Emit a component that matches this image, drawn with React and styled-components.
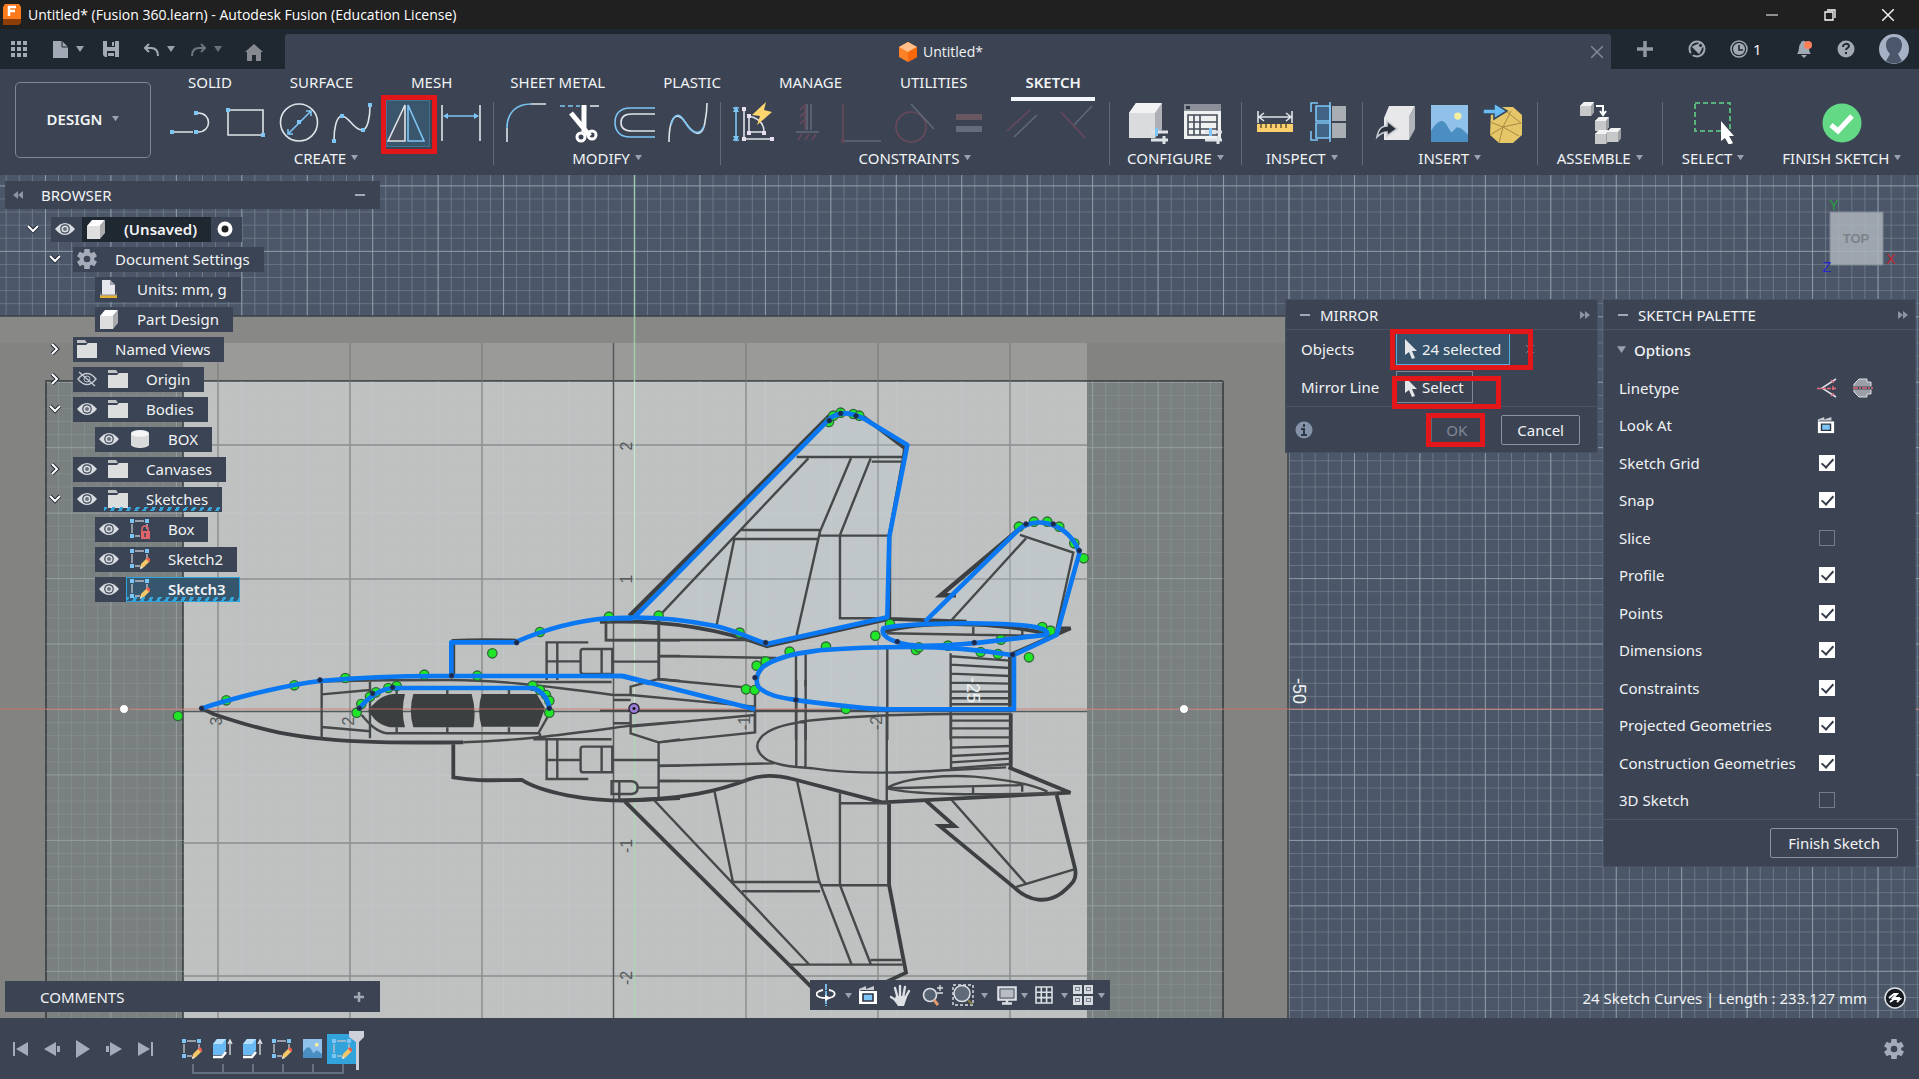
import React from "react";
import styled, { createGlobalStyle, css } from "styled-components";

const c = {
  title: "#1f201f",
  bar: "#1f2731",
  panel: "#3c4454",
  border: "#7d8796",
  text: "#f1f3f5",
  muted: "#a3a9b4",
  blue: "#7cc5f5",
  light: "#dcdfe4",
  red: "#e3161a",
  row: "#3b4454",
};

const Global = createGlobalStyle`
  * { box-sizing: border-box; }
  html, body, #root { height: 100%; }
  body { margin: 0; background: ${c.panel}; color: ${c.text}; font: 15px/20px "Noto Sans", "Open Sans", sans-serif; overflow: hidden; }
  button, input { font: inherit; color: inherit; }
  button { background: none; border: 0; padding: 0; display: inline-flex; align-items: center; justify-content: center; white-space: nowrap; }
  svg { display: block; flex: none; }
  ul { list-style: none; margin: 0; padding: 0; }
`;

/* ---------- shell ---------- */
const Page = styled.div`display: flex; flex-direction: column; height: 100vh;`;
const TitleBar = styled.header`
  display: flex; align-items: center; height: 29px; padding: 0 19px 0 3px; gap: 7px; background: ${c.title};
  font: 14px/20px "Open Sans", "Noto Sans", sans-serif;
`;
const TitleText = styled.span`flex: 1; color: #fff;`;
const WindowButtons = styled.div`display: flex; gap: 34px; button { width: 24px; height: 24px; }`;
const QuickBar = styled.div`display: flex; height: 40px; background: ${c.bar};`;
const QuickTools = styled.nav`display: flex; align-items: center; width: 285px; padding: 0 20px 0 8px; gap: 3px; color: ${c.muted};`;
const QuickButton = styled.button`width: ${(p) => p.$w || 22}px; height: 24px; gap: 8px; margin-left: ${(p) => p.$ml || 0}px; opacity: ${(p) => (p.$dim ? 0.6 : 1)};`;
const DocumentTab = styled.div`
  flex: 1; margin-top: 5px; display: grid; grid-template-columns: 1fr 24px; align-items: center;
  background: ${c.panel}; border-radius: 3px 3px 0 0; padding: 0 2px 0 12px; color: #858c97;
`;
const DocumentName = styled.span`display: flex; justify-content: center; align-items: center; gap: 6px; color: ${c.text}; font: 14px/20px "Open Sans", sans-serif;`;
const AccountTools = styled.nav`display: flex; align-items: center; gap: 24px; width: 308px; padding: 0 14px 0 24px; color: ${c.muted};`;
const AccountButton = styled.button`gap: 5px; margin-left: ${(p) => (p.$apart ? 9 : 0)}px; span { color: ${c.text}; }`;

/* ---------- ribbon ---------- */
const Ribbon = styled.div`display: flex; height: 106px; padding: 0 3px 0 15px; background: ${c.panel};`;
const Workspace = styled.button`
  width: 136px; height: 76px; margin-top: 13px; padding-bottom: 3px; gap: 10px; border: 1px solid ${c.border}; border-radius: 5px; font-weight: 600; flex: none;
`;
const RibbonMain = styled.div`flex: 1; min-width: 0; margin-left: 8px;`;
const Tabs = styled.div`display: flex; gap: 30px; padding-left: 15px; height: 33px;`;
const Tab = styled.button`
  height: 32px; padding: 3px 14px 0; align-items: flex-start;
  border-bottom: 4px solid ${(p) => (p.$active ? "#f3f6fb" : "transparent")};
  font-weight: ${(p) => (p.$active ? 600 : 400)};
`;
const Groups = styled.div`display: flex;`;
const Group = styled.section`
  display: flex; flex-direction: column; align-items: center; justify-content: space-between; height: 63px; padding: 0 ${(p) => (p.$roomy ? 6 : 5)}px;
  border-right: ${(p) => (p.$last ? 0 : 1)}px solid #606a79;
`;
const GroupTools = styled.div`display: flex; height: 42px;`;
const Tool = styled.button`
  position: relative; width: 54px; height: 42px;
  ${(p) => p.$active && css`&::before { content: ""; position: absolute; z-index: 0; inset: -2px 4px -3px 6px; background: #3a566c; border: 1px solid #3f7390; }
    svg { position: relative; }
    &::after { content: ""; position: absolute; inset: -7px -3px -10px 1px; border: 5px solid ${c.red}; }`}
`;
const GroupLabel = styled.button`gap: 5px; height: 15px; padding: 0 ${(p) => (p.$roomy ? 13 : 12)}px;`;

/* ---------- stage and floating panels ---------- */
const Stage = styled.main`position: relative; flex: 1; min-height: 0; overflow: hidden; background: #4b5768;`;
const Drawing = styled.svg`position: absolute; inset: 0; width: 100%; height: 100%;`;
const Overlay = styled.div`position: relative; display: flex; flex-direction: column; justify-content: space-between; height: 100%; padding: 6px 4px 6px 5px;`;
const OverlayTop = styled.div`display: flex; justify-content: space-between;`;
const OverlayBottom = styled.div`display: grid; grid-template-columns: 1fr auto 1fr; align-items: end;`;
const Browser = styled.aside`width: 375px;`;
const BarHeader = styled.div`
  display: flex; align-items: center; height: ${(p) => p.$h || 28}px; padding: 0 15px 0 8px; background: ${c.panel}; width: 375px;
  color: ${c.muted}; span { flex: 1; color: ${c.text}; margin-left: ${(p) => p.$ml || 18}px; }
`;
const Tree = styled.ul`padding-top: 5px;`;
const Node = styled.li`display: flex; align-items: center; height: 30px; padding-left: ${(p) => 18 + p.$level * 22}px;`;
const Toggle = styled.button`width: 20px; height: 20px; margin-right: 8px;`;
const NoToggle = styled.span`width: 28px;`;
const NodeBox = styled.div`display: flex; height: 25px; background: ${c.row};`;
const Cell = styled.span`display: inline-flex; align-items: center; justify-content: center; width: 31px; height: 25px; padding-right: 4px;`;
const hatch = css`&::after { content: ""; position: absolute; left: 0; right: 0; bottom: 1px; height: 4px; background: repeating-linear-gradient(120deg, #35a7dc 0 3px, transparent 3px 7px); }`;
const NodeName = styled.button`
  position: relative; height: 25px; padding-right: 14px; font-weight: ${(p) => (p.$bold ? 600 : 400)};
  ${(p) => p.$root && css`background: ${c.bar};`}
  ${(p) => p.$selected && css`background: #36566e; box-shadow: inset 0 0 0 1px #2ba5dc;`}
  ${(p) => p.$hatch && hatch}
`;
const NodeText = styled.span`padding-left: 11px;`;

const RightSide = styled.div`display: flex; flex-direction: column; align-items: flex-end;`;
const CubeSlot = styled.div`height: 119px; padding: 16px 18px 0 0;`;
const Panels = styled.div`display: flex; align-items: flex-start; gap: 7px;`;
const Panel = styled.section`width: 311px; background: ${c.panel}; box-shadow: 0 0 0 1px #465062;`;
const PanelHeader = styled.div`
  display: flex; align-items: center; height: 30px; padding: 0 7px 0 14px; gap: 10px; color: ${c.muted}; border-bottom: 1px solid #4a5465;
  span { flex: 1; color: ${c.text}; }
`;
const Field = styled.div`display: flex; align-items: center; height: 38px; padding: 0 15px; > label { width: 95px; }`;
const Selector = styled.button`
  position: relative; height: 32px; padding: 0 8px; gap: 5px; border: 1px solid ${(p) => (p.$on ? "#55aede" : c.border)}; background: ${(p) => (p.$on ? "#37536c" : "transparent")};
  &::after { content: ""; position: absolute; inset: ${(p) => (p.$on ? "-5px -24px -6px -7px" : "4px -29px -7px -5px")}; border: 5px solid ${c.red}; }
`;
const Clear = styled.button`margin-left: 16px; color: #858c97;`;
const DialogFooter = styled.div`display: flex; align-items: center; height: 46px; padding: 0 17px 0 9px; border-top: 1px solid #4a5465;`;
const Push = styled.button`
  position: relative; height: 30px; padding: 0 ${(p) => (p.$wide ? 17 : 15)}px; border: 1px solid ${(p) => (p.disabled ? "transparent" : "#8a93a1")}; border-radius: 2px;
  ${(p) => p.disabled && css`margin: 0 21px 0 auto; height: 26px; padding: 0 12px 0 14px; color: #7f8794; border-left-color: #5d6776;
    &::after { content: ""; position: absolute; inset: -5px -6px; border: 5px solid ${c.red}; }`}
`;
const OptionsHeader = styled.button`height: 39px; padding-left: 13px; gap: 8px; font-weight: 500;`;
const OptionRows = styled.div`display: grid; grid-template-rows: repeat(12, 1fr); height: 450px; padding: 0 44px 0 15px;`;
const OptionRow = styled.div`display: flex; align-items: center; justify-content: space-between; padding-right: ${(p) => (p.$wide ? 0 : 36)}px;`;
const IconPair = styled.span`display: flex; gap: 16px; margin-right: -2px;`;
const Check = styled.input`
  appearance: none; width: 16px; height: 16px; margin: 0; display: grid; place-items: center; border: 1px solid #727c8b; background: transparent;
  &:checked { background: #fff; border-color: #fff; }
  &:checked::after { content: ""; width: 5px; height: 10px; margin-bottom: 3px; border: solid #353c4a; border-width: 0 2px 2px 0; transform: rotate(42deg); }
`;
const PaletteFooter = styled.div`display: flex; justify-content: flex-end; align-items: center; height: 47px; padding: 0 17px; border-top: 1px solid #4a5465;`;
const NavBar = styled.nav`display: flex; align-items: center; height: 30px; margin-bottom: 2px; padding: 0 3px 0 2px; background: ${c.panel}; color: ${c.light};`;
const NavTool = styled.button`width: ${(p) => p.$w}px; height: 30px; gap: ${(p) => p.$g || 0}px;`;
const Status = styled.div`display: flex; justify-content: flex-end; align-items: center; gap: 17px; height: 28px; padding-right: 9px;`;

/* ---------- timeline ---------- */
const Timeline = styled.footer`display: flex; align-items: center; height: 61px; padding: 0 15px 0 9px; background: ${c.panel}; color: ${c.muted};`;
const Playback = styled.div`display: flex; gap: 8px; button { width: 23px; height: 26px; }`;
const History = styled.div`position: relative; display: flex; margin: 0 auto 0 21px;`;
const Feature = styled.button`
  position: relative; width: 30px; height: 30px; background: ${(p) => (p.$on ? "#33a3db" : "none")};
  &::after { content: ""; position: absolute; top: 30px; left: ${(p) => (p.$first ? 15 : -15)}px; right: 13px; height: 8px; border: solid #667080; border-width: 0 2px 2px 0; }
`;
const Marker = styled.svg`position: absolute; right: -7px; top: -3px;`;

/* ---------- small icons ---------- */
const Caret = ({ s = 8 }) => <svg width={s} height={s} viewBox="0 0 8 8"><path d="M0 1h8L4 7z" fill="#9aa1ad" /></svg>;
const Svg = ({ w = 20, h = w, children, vb }) => <svg width={w} height={h} viewBox={vb || `0 0 ${w} ${h}`} fill="none">{children}</svg>;
const Minus = () => <Svg w={10}><path d="M0 5h10" stroke={c.muted} strokeWidth="2" /></Svg>;
const Double = ({ flip }) => <Svg w={10}><path d={flip ? "M5 1v8L0 5zM10 1v8L5 5z" : "M0 1v8l5-4zM5 1v8l5-4z"} fill="#8d95a2" /></Svg>;
const Cross = ({ s = 11 }) => <Svg w={s} vb="0 0 11 11"><path d="M0 0 11 11M11 0 0 11" stroke="currentColor" strokeWidth="1.3" /></Svg>;
const Eye = () => <Svg w={20} h={14}><path d="M0 7Q10-5 20 7 10 19 0 7z" fill="#d9dce1" /><circle cx="10" cy="7" r="4.8" fill="#3b4454" /><circle cx="10" cy="7" r="3.6" fill="#d9dce1" /><circle cx="10" cy="7" r="2" fill="#6a717d" /></Svg>;
const EyeOff = () => <Svg w={20} h={16}><path d="M1 8Q10-3 19 8 10 19 1 8zM2 1l16 14" stroke="#c4c8cf" strokeWidth="1.4" /><circle cx="10" cy="8" r="3" stroke="#c4c8cf" /></Svg>;
const Folder = () => <Svg w={20} h={18}><path d="M0 0h8l2 3H0z" fill="#c3c4c6" /><path d="M0 5h9l2-2h9v15H0z" fill="#dcdddd" /></Svg>;
const Cube = () => <Svg w={18} h={19}><path d="M0 6 5 0h13l-5 6z" fill="#fff" /><path d="M0 6h13v13H0z" fill="#dededf" /><path d="m13 6 5-6v13l-5 6z" fill="#a9abad" /></Svg>;
const Cylinder = () => <Svg w={18} h={18}><path d="M0 3v12c2 4 16 4 18 0V3z" fill="#d9dadc" /><ellipse cx="9" cy="3.4" rx="9" ry="3.4" fill="#f6f6f7" /></Svg>;
const GearIcon = ({ s, f = "#a5abb8" }) => (
  <Svg w={s} vb="0 0 24 24">
    {[0, 60, 120].map((a) => <rect key={a} x="8.6" y="0" width="6.8" height="24" rx="1" fill={f} transform={`rotate(${a} 12 12)`} />)}
    <circle cx="12" cy="12" r="6.3" stroke={f} strokeWidth="5" /><circle cx="12" cy="12" r="4" fill={c.panel} />
  </Svg>
);
const UnitsIcon = () => <Svg w={17} h={19}><path d="M2 0h8l5 5v10H2z" fill="#e6e8ee" /><path d="M10 0v5h5z" fill="#9ea4b0" /><path d="M0 15h17v3H0z" fill="#e6b033" /><path d="M0 12v3h17v-3" stroke="#8e95a5" /></Svg>;
const SketchIcon = ({ lock }) => (
  <Svg w={20} h={20}>
    <path d="M5 2h9M2 5v9M17 5v5M5 17h5" stroke="#b9bec7" strokeWidth="1.4" />
    <path d="M0 0h4v4H0zM15 0h4v4h-4zM0 15h4v4H0z" fill={c.blue} />
    {lock ? <g><path d="M12 13v-3a3 3 0 0 1 6 0v3" stroke="#e0646b" strokeWidth="1.6" /><path d="M11 12h9v8h-9z" fill="#e0646b" /><path d="M15 14v4" stroke="#3b4454" strokeWidth="1.5" /></g>
      : <g><path d="m10 20 1-5 6-6 3 3-6 6z" fill="#f6c766" /><path d="m16 10 2-2 3 3-2 2z" fill="#ef5d50" /><path d="m10 20 1-3 2 2z" fill="#eee" /></g>}
  </Svg>
);
const Chevron = ({ open }) => <Svg w={12}><path d={open ? "M1 3l5 5 5-5" : "M3 1l5 5-5 5"} stroke="#232a35" strokeWidth="4" /><path d={open ? "M1 3l5 5 5-5" : "M3 1l5 5-5 5"} stroke="#fff" strokeWidth="2" /></Svg>;
const Pointer = () => <Svg w={12} h={20}><path d="M0 0v16l4-3 3 7 3-1-3-7h5z" fill="#e4e6ea" /></Svg>;
const LookAt = ({ s = 20 }) => <Svg w={s} vb="0 0 20 20"><path d="M1 7V4l7-3v3l8-3v4H3z" fill="#c9ccd1" /><path d="M1 6h18v13H1z" fill="#fff" /><path d="M5 9h10v7H5z" fill={c.blue} stroke="#2e3542" strokeWidth="1.6" /></Svg>;
const Picture = ({ s }) => <Svg w={s} vb="0 0 20 20"><path d="M0 0h20v20H0z" fill="#8fc1ea" /><circle cx="14.5" cy="6" r="2" fill="#f4eea0" /><path d="M0 14C3 9 6 7 8 10l3 5 3-3c2 0 4 2 6 4v4H0z" fill="#4b8ec1" /></Svg>;
const Extrude = () => <Svg w={22} h={22}><path d="m2 6 4-5h9v11l-4 5H2z" fill="#69b9f5" /><path d="m2 6 4-5h9l-4 5z" fill="#b6e0fd" /><path d="M2 19h9l4-5" stroke="#fff" strokeWidth="2.4" /><path d="M19 17V3m-2 3 2-4 2 4" stroke={c.light} strokeWidth="1.3" /></Svg>;

/* ---------- ribbon icons ---------- */
const W = "#dfe3e8";
const offRed = "#67495a";
const offGrey = "#5f6978";
const dot = (x, y) => <rect key={`${x}-${y}`} x={x - 2} y={y - 2} width="4" height="4" fill={c.blue} />;
const T = ({ children }) => <svg width="42" height="42" viewBox="0 0 42 42" fill="none" strokeWidth="1.6" stroke={W}>{children}</svg>;
const NoS = ({ children }) => <g stroke="none">{children}</g>;
const I = {
  line: <T><path d="M2 30h21M28 30c14 0 14-19 0-19" /><NoS>{dot(2, 30)}{dot(26, 30)}{dot(26, 11)}</NoS></T>,
  rect: <T><path d="M4 8h35v25H4z" /><NoS>{dot(4, 8)}{dot(39, 33)}</NoS></T>,
  circle: <T><circle cx="21" cy="20.5" r="18.5" /><path d="m11 31 21-21M10 27v5h5M28 9h5v5" stroke={c.blue} /><NoS>{dot(21, 20)}</NoS></T>,
  spline: <T><path d="M2 38C2 28 4 14 10 14c7 0 11 14 20 14 6 0 8-14 8-24" /><NoS>{dot(2, 39)}{dot(10, 14)}{dot(31, 28)}{dot(38, 3)}</NoS></T>,
  mirror: <T><path d="M2 39 19 3v36z" fill="#48505f" /><path d="m22 3 16 36H22z" stroke={c.blue} /></T>,
  dim: <T><path d="M2 3v36M40 3v36" /><path d="M4 14h34" stroke={c.blue} /><path d="m3 14 5-3v6zM39 14l-5-3v6z" fill={c.blue} stroke="none" /></T>,
  fillet: <T><path d="M2 40V26M26 2h15" /><path d="M2 26C2 10 12 2 26 2" stroke={c.blue} /></T>,
  trim: <T><path d="M1 4h20" stroke={c.blue} strokeDasharray="5 3" /><path d="M31 4h9" /><g stroke="#fff"><path d="M12 11 31 34M25 3v27" strokeWidth="5" /><circle cx="22" cy="35" r="4" strokeWidth="3" /><circle cx="33" cy="33" r="4" strokeWidth="3" /></g></T>,
  offset: <T><path d="M42 6H17C7 6 2 12 2 20.5S7 35 17 35h25" stroke={c.blue} /><path d="M42 12H19c-8 0-11 4-11 8.5S11 29 19 29h23" /></T>,
  curve: <T><path d="M2 40C2 14 10 8 18 20s17 18 20 0c1-5 2-11 2-19" /><path d="M4 23C8 8 14 13 18 20c7 12 15 14 19 4" stroke={c.blue} /></T>,
  auto: <T><path d="M12 7v30h28M17 14v16h15c0-9-6-14-15-16" /><path d="M4 7v30M1 6h6M1 38h6" stroke={c.blue} /><path d="m4 4 3 6H1zM4 40l3-6H1z" fill={c.blue} stroke="none" /><path d="M34 0 20 13l8 1-3 9 15-13-8-2z" fill="#ffd66e" stroke="none" /><g fill="#e7dff0" stroke="none"><path d="M10 5h4v4h-4zM10 35h4v4h-4zM38 35h4v4h-4zM15 12h4v4h-4zM15 29h4v4h-4zM30 29h4v4h-4z" /></g></T>,
  fix: <T><path d="M21 2v26M25 2v26M10 30h23" stroke={offGrey} /><path d="M19 2v26M14 8l5-5M14 15l5-5M14 22l5-5M12 38l4-6M19 38l4-6M26 38l4-6" stroke={offRed} /></T>,
  perp: <T><path d="M3 2v37" stroke={offRed} /><path d="M5 39h36" stroke={offGrey} /><circle cx="3" cy="39" r="2" fill={offRed} stroke="none" /></T>,
  tangent: <T><circle cx="17" cy="25" r="15" stroke={offRed} /><path d="m17 2 23 25" stroke={offGrey} /></T>,
  equal: <T><path d="M8 15h26" stroke="#6a5762" strokeWidth="6" /><path d="M8 27h26" stroke="#646d7b" strokeWidth="6" /></T>,
  parallel: <T><path d="M5 29 28 8" stroke={offRed} /><path d="m12 35 23-22" stroke={offGrey} /></T>,
  mid: <T><path d="M5 10 29 36" stroke={offRed} /><path d="M18 23 36 4" stroke={offGrey} /></T>,
  config: <T><NoS><path d="m2 11 7-10h26v26l-7 9H2z" fill="#dadbdd" /><path d="m2 11 7-10h26l-7 10z" fill="#f2f2f3" /><path d="m28 11 7-10v26l-7 9z" fill="#adb1b5" /></NoS><path d="M24 30h17M24 38h17M37 34v8" strokeWidth="3" /><path d="M28 26h3v8h-3z" fill={c.blue} stroke="none" /></T>,
  table: <T><NoS><path d="M3 2h37v35H3z" fill="#f0f1f1" /><path d="M3 2h37v7H3z" fill="#8b9098" /><path d="M5 4h4v3H5z" fill="#303744" /></NoS><path d="M7 13h29v20H7zM7 20h29M7 27h29M13 13v20M19 13v20" stroke="#444c58" /><path d="M24 30h17M24 38h17M37 34v8" strokeWidth="3" /><path d="M28 26h3v8h-3z" fill={c.blue} stroke="none" /></T>,
  measure: <T><path d="M4 9v12M38 9v12M6 15h30M10 11l-5 4 5 4M32 11l5 4-5 4" /><path d="M3 22h36v8H3z" fill="#fccf6c" stroke="none" /><path d="M7 22v4M12 22v4M17 22v4M22 22v4M27 22v4M32 22v4" stroke="#6d5b37" /></T>,
  section: <T><NoS><path d="M24 4h14v15H24zM24 21h14v15H24z" fill="#a9adb4" /></NoS><path d="M8 4h14v15H8zM8 21h14v15H8z" fill="#426587" stroke={c.blue} /><path d="M10 1H3v9M3 29v9h7M22 0v40" stroke={c.blue} /></T>,
  insert: <T><NoS><path d="m9 16 5-12h26l-6 11v23H9z" fill="#e8e8ea" /><path d="m34 15 6-11v23l-6 11z" fill="#b1b5b9" /><path d="M2 35c2-10 6-11 10-11v-5l10 8-10 7v-4c-4 0-6 1-10 5z" fill="#2b313d" stroke="#c9cdd3" /></NoS></T>,
  picture: <Picture s={37} />,
  mesh: <T><NoS><path d="m8 10 8-5h14l9 8v20l-9 8H16l-9-8z" fill="#e5c769" /><path d="M0 7h11V1l13 8-13 8v-5H0z" fill="#6cbcf4" stroke="#35485c" /></NoS><path d="m7 20 13 5 18-4M7 33l13-8 16 9M20 25l-4 16M24 10l14 11M20 25 28 9" stroke="#a88a42" strokeWidth="1" /></T>,
  assemble: <T><NoS>{[[1, 0], [16, 15], [16, 28], [28, 26]].map(([x, y]) => <g key={`${x}${y}`} transform={`translate(${x} ${y})`}><path d="m0 4 4-4h10v10l-3 4H0z" fill="#c6c8ca" /><path d="m0 4 4-4h10l-3 4z" fill="#f2f2f2" /><path d="m11 4 3-4v10l-3 4z" fill="#9da1a6" /></g>)}</NoS><path d="M17 4h7v8m-3-3 3 4 3-4" stroke="#fff" strokeWidth="2" /></T>,
  select: <T><path d="M3 1h35v28H3z" stroke="#61d386" strokeDasharray="5 3" /><path d="M29 19v20l4-3 4 7 4-2-4-7h5z" fill="#fff" stroke="none" /></T>,
  finish: <T><circle cx="21" cy="21" r="19.5" fill="#64d985" stroke="none" /><path d="m10 23 7 6 14-15" stroke="#fff" strokeWidth="5" /></T>,
};

const groups = [
  ["CREATE", [["Line", "line"], ["Rectangle", "rect"], ["Circle", "circle"], ["Spline", "spline"], ["Mirror", "mirror"], ["Sketch Dimension", "dim"]]],
  ["MODIFY", [["Fillet", "fillet"], ["Trim", "trim"], ["Offset", "offset"], ["Blend Curve", "curve"]]],
  ["CONSTRAINTS", [["Auto Constrain", "auto"], ["Fix", "fix"], ["Perpendicular", "perp"], ["Tangent", "tangent"], ["Equal", "equal"], ["Parallel", "parallel"], ["Midpoint", "mid"]]],
  ["CONFIGURE", [["Configure", "config"], ["Configuration Table", "table"]]],
  ["INSPECT", [["Measure", "measure"], ["Section Analysis", "section"]]],
  ["INSERT", [["Insert Derive", "insert"], ["Canvas", "picture"], ["Insert Mesh", "mesh"]]],
  ["ASSEMBLE", [["Joint", "assemble"]]],
  ["SELECT", [["Select", "select"]]],
  ["FINISH SKETCH", [["Finish", "finish"]]],
];

const nodes = [
  { level: 0, open: true, eye: 1, icon: <Cube />, text: "(Unsaved)", bold: true, root: true, radio: true },
  { level: 1, open: true, icon: <GearIcon s={20} />, text: "Document Settings" },
  { level: 2, icon: <UnitsIcon />, text: "Units: mm, g" },
  { level: 2, icon: <Cube />, text: "Part Design" },
  { level: 1, open: false, icon: <Folder />, text: "Named Views" },
  { level: 1, open: false, eye: 2, icon: <Folder />, text: "Origin" },
  { level: 1, open: true, eye: 1, icon: <Folder />, text: "Bodies" },
  { level: 2, eye: 1, icon: <Cylinder />, text: "BOX" },
  { level: 1, open: false, eye: 1, icon: <Folder />, text: "Canvases" },
  { level: 1, open: true, eye: 1, icon: <Folder />, text: "Sketches", hatch: true },
  { level: 2, eye: 1, icon: <SketchIcon lock />, text: "Box" },
  { level: 2, eye: 1, icon: <SketchIcon />, text: "Sketch2" },
  { level: 2, eye: 1, icon: <SketchIcon />, text: "Sketch3", bold: true, selected: true, hatch: true },
];

const options = [["Sketch Grid", 1], ["Snap", 1], ["Slice", 0], ["Profile", 1], ["Points", 1], ["Dimensions", 1], ["Constraints", 1], ["Projected Geometries", 1], ["Construction Geometries", 1], ["3D Sketch", 0]];

/* ---------- model view ---------- */
const noseDots = [[54, 408], [199, 361], [403, 316], [556, 294], [793, 284], [952, 287], [997, 220], [1140, 156], [1347, 110], [1496, 107], [590, 398], [604, 372], [630, 350], [648, 337], [685, 324], [710, 318], [1118, 317], [1140, 330], [1158, 345], [1168, 362], [1168, 398]];
const wingDots = [[687, 126], [700, 107], [722, 98], [760, 102], [778, 107], [419, 758], [497, 844], [470, 857], [569, 815], [678, 800], [826, 767], [870, 732], [438, 928], [464, 930], [738, 987], [948, 810], [957, 802], [1044, 797], [1142, 816], [1194, 822], [1203, 779], [1287, 832], [1327, 741], [1352, 752], [1257, 440], [1302, 425], [1342, 425], [1378, 440], [1423, 490], [1451, 535]];
const Dots = ({ list }) => list.map(([x, y]) => <circle key={`${x},${y}`} cx={x} cy={y} r="14" fill="#1fe627" stroke="#32683a" strokeWidth="4" />);
const Vertices = ({ list }) => list.map(([x, y]) => <circle key={`${x},${y}`} cx={x} cy={y} r="7" fill="#172750" stroke="#2b3a55" strokeWidth="3" />);

const NOSE = "translate(160 580) scale(.3333)";
const WING = "translate(600 380) scale(.3333)";
const LOWER = "matrix(.4592 0 0 .3333 400 680)";
const thin = { stroke: "#45494a", strokeWidth: 2.4, vectorEffect: "non-scaling-stroke" };
const bold = { stroke: "#3d4042", strokeWidth: 3.8, vectorEffect: "non-scaling-stroke" };
const picked = { stroke: "#0a78f2", strokeWidth: 4.6, vectorEffect: "non-scaling-stroke", strokeLinejoin: "round" };

function ModelView() {
  return (
    <Drawing fill="none" aria-label="Aircraft sketch">
      <defs>
        <pattern id="minor" width="13.09" height="13.09" patternUnits="userSpaceOnUse" patternTransform="translate(634 709)"><path d="M0 0H14M0 0V14" stroke="#b9cbd8" strokeOpacity=".34" strokeWidth="1.6" /></pattern>
        <pattern id="major" width="65.45" height="65.45" patternUnits="userSpaceOnUse" patternTransform="translate(634 709)"><path d="M0 0H66M0 0V66" stroke="#c3d2db" strokeOpacity=".42" strokeWidth="2" /></pattern>
      </defs>
      <g transform="translate(0 -175)">
        <path d="M0 175H5000V2000H0z" fill="url(#minor)" />
        <path d="M0 175H5000V2000H0z" fill="url(#major)" />
        <path d="M-5 316H1288V2000H-5z" fill="#838382" stroke="#3e4244" strokeWidth="1.5" />
        <path d="M0 317H1287V343H0z" fill="#888887" />
        <path d="M183 343H1087V381H183z" fill="#9a9a99" />
        <path d="M46 381H1223V2000H46z" fill="#7a7f7f" />
        <path d="M183 381H1087V2000H183z" fill="#bfc1c1" />
        <path d="M1223 381V2000M46 2000V381H1223M183 381V2000" stroke="#34383a" strokeWidth="1.5" />
        <path d="M46 381H1223V2000H46z" fill="url(#minor)" opacity=".6" />
        <path d="M46 381H1223V2000H46z" fill="url(#major)" opacity=".65" />
        <path d="M218 343V1100M350 343V1100M482 343V1100M746 343V1100M878 343V1100M1010 343V1100M183 445H1087M183 579H1087M183 843H1087M183 976H1087" stroke="#767a7a" strokeOpacity=".7" strokeWidth="1.5" />
        <path d="M613.5 343V1100M183 711.5H1087" stroke="#55595a" strokeWidth="1.5" />
        <path d="M634.5 175V1100" stroke="#a5dcae" strokeOpacity=".75" strokeWidth="1.5" />
        <path d="M634.5 381V709" stroke="#eef5ee" strokeOpacity=".5" />

        <g fill="#c8dbe4" fillOpacity=".22">
          <path transform={WING} d="M105 710 690 115l100-5 132 85-54 275-6 242-362 80C350 730 230 710 105 710z" />
          <path transform={WING} d="M1235 825C1050 795 600 790 490 860c-30 40 0 90 110 102 100 13 200 26 262 26h380z" />
          <path transform={WING} d="m975 725 285-285c100-60 160 20 178 80l-68 245z" />
        </g>

        <g transform={NOSE}>
          <path {...bold} d="M125 385 160 402C300 450 400 475 600 484c100 5 200 4 310 3M880 487V592C960 605 1000 600 1085 600 1150 640 1280 662 1400 662L1560 654M880 290V183C960 178 1000 180 1070 182" />
          <path {...thin} d="M480 305C600 300 720 300 870 300 1000 300 1140 315 1360 345M910 487C1100 480 1200 465 1412 437L1560 425M485 300V475M630 305V475M485 343 630 330M485 441 630 454" />
          <path {...thin} d="M605 405C630 435 650 455 680 460H1135L1172 395M710 442V460M862 442V460M1047 442V460M710 330V345M862 330V345M1047 330V345M1140 460V470" />
          <path {...thin} d="M1160 300V187H1285M1192 187V300M1160 244H1262M1357 207H1270Q1262 207 1262 215V274Q1262 282 1270 282H1357zM1325 207V282M1357 245H1495M1120 306H1355M1120 478H1355M1160 480V597H1285M1192 480V597M1160 540H1262M1357 500H1270Q1262 500 1262 508V569Q1262 577 1270 577H1357zM1325 500V577M1357 540H1495" />
          <path {...thin} d="M1355 604H1415Q1433 606 1433 623T1415 642H1355zM1378 604V660M1433 623H1495M1338 130V181H1560M1496 120V297L1412 320V345H1360M1412 360H1360M1496 228H1560M1496 297 1560 303M1360 430H1412V460L1496 487V660M1412 400V430M1496 487 1560 478M1496 557H1560M1496 603H1560" />
          <path d="M625 390C650 360 670 345 700 342H735Q722 392 735 442H690C660 435 640 420 625 390zM760 342H935Q950 392 940 442H760Q745 392 760 342zM965 342H1130L1155 385 1135 440H965Q950 392 965 342z" fill="#3c3f40" />
        </g>
        <g transform={WING}>
          <path {...bold} strokeWidth="4.4" d="M88 708 690 106M1255 450 1022 646H1068" />
          <path {...bold} d="M790 110 915 205 910 240 868 470V715M0 726C180 719 340 739 500 799L720 750 868 717 1100 725M1370 745H1412L1230 825M1230 830V980M850 755C1000 715 1250 735 1350 765" />
          <path {...thin} d="M185 700 625 235M590 231H908M815 245H905M753 235 660 455 590 765M812 235 720 465V715H862M420 450H660M400 477H655M660 467H868M403 477 350 735M1260 465 1420 518 1370 745M1278 475 1055 720" />
          <path {...thin} d="M18 730V780H450M177 730V898L465 925V1058M177 828 530 834M92 945 465 980M92 1040 465 1005M588 820V1080M617 820V1080M862 800V1080M860 760 1350 768M1120 740V765M1267 750V770" />
          <path {...thin} d="M1052 820V1080M1052 829 1230 842M1052 854 1230 864M1052 881 1230 888M1052 908 1230 911M1052 935H1230M1052 955H1230M1052 973H1230M0 992H1235" />
        </g>
        <g transform={LOWER}>
          <path {...bold} d="M490 365 895 920M480 361C620 360 700 330 760 298Q800 278 855 297L1050 367 1460 338 1325 262M1065 370V615L1102 878 1060 905M1330 100V262" />
          <path {...bold} d="M1145 362 1208 438H1175L1340 625C1370 665 1410 670 1440 640 1465 610 1475 600 1470 565L1430 345" />
          <path {...thin} d="M553 360 890 852M845 854H1095M1025 840H1092M865 305 912 600 983 852M958 340V615L1025 852M958 370H1065M725 606H912M745 634H915M915 616H1065M685 335 725 606M563 258 815 250M563 303H755M563 187 773 157V90" />
          <path {...thin} d="M860 127H885M870 127C780 145 755 200 800 240 830 260 870 262 900 265 1000 285 1100 278 1200 270L1320 262M870 125C950 112 1050 103 1200 102H1330M863 0V262M883 0V20M883 127V262M1060 90V370" />
          <path {...thin} d="M1200 100V268M1200 122H1330M1200 145H1330M1200 172H1330M1200 203 1330 198M1200 228 1330 219M1200 247 1330 236M1200 265 1330 252M1060 325C1100 290 1200 285 1250 290 1330 300 1380 315 1410 335M1060 325C1120 345 1250 345 1430 340M1065 325 1355 315M1248 318V342M1355 315V335M1200 358 1362 610M1340 622 1468 568" />
        </g>

        <path d="M0 709H5000" stroke="#d5705f" strokeOpacity=".8" />
        <g transform={NOSE}>
          <Dots list={noseDots} />
          <path {...picked} d="M125 385C250 345 400 312 480 303 600 292 750 287 874 288H1385L1470 310M874 288V187H1065C1150 150 1250 122 1345 115H1420M598 385C630 345 670 325 700 324H1120C1150 335 1165 360 1168 385" />
          <Vertices list={[[125, 385], [480, 300], [1070, 188], [875, 287], [598, 385], [1168, 385], [638, 340], [698, 322]]} />
        </g>
        <g transform={WING}>
          <Dots list={wingDots} />
          <path {...picked} d="M-5 718C120 705 230 715 347 738 400 750 440 770 500 792L862 712 868 470 922 195 790 115Q730 85 690 115L105 710M0 888H70L465 988" />
          <path {...picked} d="M1235 825Q1050 795 862 802C700 805 560 810 490 860Q460 890 475 920C500 950 560 955 600 962 700 975 800 988 862 988H1242V825L1370 765 1438 520C1420 450 1330 400 1260 445L975 725" />
          <path {...picked} d="M850 745C900 730 1200 722 1310 742Q1350 752 1340 764C1200 780 1080 800 950 797 880 790 840 770 850 745z" />
          <Vertices list={[[497, 788], [722, 100], [768, 108], [688, 122], [588, 960], [465, 893], [1123, 788], [892, 785], [1238, 824], [1278, 432], [1360, 432], [1438, 512]]} />
        </g>
        <circle cx="634" cy="708.5" r="5" fill="#9b7fd6" stroke="#32263f" strokeWidth="1.5" /><circle cx="634" cy="708.5" r="1.5" fill="#111" />
        <circle cx="124" cy="709" r="4.5" fill="#fff" stroke="#777" /><circle cx="1184" cy="709" r="4.5" fill="#fff" stroke="#777" />
        <g fontFamily="Liberation Sans, sans-serif" fontSize="16" textAnchor="middle" fill="#55595b">
          {[["2", 632, 446], ["1", 632, 579], ["-1", 632, 846], ["-2", 632, 978], ["3", 222, 721], ["2", 354, 721], ["-1", 750, 723], ["-2", 882, 723]].map(([t, x, y]) => <text key={`${x}${y}`} transform={`translate(${x} ${y}) rotate(-90)`}>{t}</text>)}
          <text transform="translate(967 690) rotate(90)" fontSize="18" fill="#eef2f3">-25</text>
          <text transform="translate(1293 691) rotate(90)" fontSize="18" fill="#eef2f3">-50</text>
        </g>
      </g>
    </Drawing>
  );
}

const ViewCube = () => (
  <svg width="80" height="80" viewBox="0 0 80 80" role="img" aria-label="View cube">
    <path d="M13 15H66V68H13z" fill="#aab0b8" fillOpacity=".88" stroke="#7e8793" />
    <g fontFamily="Liberation Sans, sans-serif" textAnchor="middle">
      <text x="39" y="46" fontSize="13" fontWeight="700" fill="#7c828a">TOP</text>
      <text x="17" y="13" fontSize="14" fill="#23a03c">Y</text>
      <text x="10" y="75" fontSize="14" fill="#2524c8">Z</text>
      <text x="74" y="67" fontSize="14" fill="#c8242f">X</text>
    </g>
  </svg>
);

function Header() {
  return (
    <>
      <TitleBar>
        <Svg w={18} h={21}><path d="M2 0h14l2 3v14H0V3z" fill="#fb7a1c" /><path d="M0 15h18v4l-2 2H0z" fill="#8d3e07" /><path d="M6 12V3h7M6 7h6" stroke="#fff" strokeWidth="2.5" /></Svg>
        <TitleText>Untitled* (Fusion 360.learn) - Autodesk Fusion (Education License)</TitleText>
        <WindowButtons>
          <button aria-label="Minimize"><Svg w={12}><path d="M0 6h12" stroke="#fff" /></Svg></button>
          <button aria-label="Restore"><Svg w={12}><path d="M1 3h8v8H1zM3 1h8v8" stroke="#fff" strokeWidth="1.3" /></Svg></button>
          <button aria-label="Close"><Cross s={12} /></button>
        </WindowButtons>
      </TitleBar>
      <QuickBar>
        <QuickTools>
          <QuickButton aria-label="Data panel"><Svg w={16}>{[0, 6, 12].map((x) => [0, 6, 12].map((y) => <rect key={x + "" + y} x={x} y={y} width="4" height="4" fill="#a3a9b4" />))}</Svg></QuickButton>
          <QuickButton $ml={15} $w={40} aria-label="File"><Svg w={15} h={17}><path d="M0 0h9l6 6v11H0z" fill="#a3a9b4" /><path d="M9 0v6h6" stroke="#1f2731" /></Svg><Caret /></QuickButton>
          <QuickButton $ml={9} aria-label="Save"><Svg w={16}><path d="M0 0h16v16H2l-2-2z" fill="#a3a9b4" /><path d="M4 0h8v6H4zM4 10h8v6H4z" fill="#1f2731" /><path d="M9 1h2v4H9zM5 12h6v3H5z" fill="#a3a9b4" /></Svg></QuickButton>
          <QuickButton $ml={14} $w={40} aria-label="Undo"><Svg w={15} h={13}><path d="M5 1 1 5l4 4M1 5h6c4 0 7 2 7 8" stroke="#a3a9b4" strokeWidth="2" /></Svg><Caret /></QuickButton>
          <QuickButton $ml={4} $w={40} $dim aria-label="Redo"><Svg w={15} h={13}><path d="m10 1 4 4-4 4M14 5H8C4 5 1 7 1 13" stroke="#a3a9b4" strokeWidth="2" /></Svg><Caret /></QuickButton>
          <QuickButton $ml={14} aria-label="Home"><Svg w={18} h={24}><path d="m0 15 9-8 9 8h-2v9h-5v-6H7v6H2v-9z" fill="#868a90" /></Svg></QuickButton>
        </QuickTools>
        <DocumentTab>
          <DocumentName><Svg w={18} h={20}><path d="m9 0 9 5v10l-9 5-9-5V5z" fill="#fd8126" /><path d="m9 0 9 5-9 5-9-5z" fill="#ffc08b" /><path d="m9 10 9-5v10l-9 5z" fill="#f9690c" /></Svg>Untitled*</DocumentName>
          <button aria-label="Close document"><Cross s={12} /></button>
        </DocumentTab>
        <AccountTools>
          <AccountButton aria-label="New document"><Svg w={20}><path d="M10 2v16M2 10h16" stroke="#9298a2" strokeWidth="3.5" /></Svg></AccountButton>
          <AccountButton $apart aria-label="Extensions"><Svg w={18}><circle cx="9" cy="9" r="7.5" stroke="#a3a9b4" strokeWidth="2" /><path d="m3 15 4-4" stroke="#1f2731" strokeWidth="3" /><path d="m5 7 6 6 2-4-4-4zM9 6l3-3M12 9l3-3" fill="#a3a9b4" stroke="#a3a9b4" strokeWidth="1.6" /></Svg></AccountButton>
          <AccountButton aria-label="Job status 1"><Svg w={18}><circle cx="9" cy="9" r="8" stroke="#a3a9b4" strokeWidth="1.5" /><circle cx="9" cy="9" r="6" fill="#a3a9b4" /><path d="M9 5v5h4" stroke="#1f2731" strokeWidth="1.6" /></Svg><span>1</span></AccountButton>
          <AccountButton $apart aria-label="Notifications"><Svg w={18} h={20}><path d="M2 15c3-3 1-9 4-11 0-3 5-3 5 0 4 2 2 8 5 11zM6 16h6l-3 3z" fill="#a3a9b4" /><circle cx="13" cy="6" r="4" fill="#fb8059" /></Svg></AccountButton>
          <AccountButton aria-label="Help"><Svg w={18}><circle cx="9" cy="9" r="8.5" fill="#a3a9b4" /><path d="M6 7c0-4 6-4 6-1 0 2-3 2-3 4M9 12v2" stroke="#1f2731" strokeWidth="2" /></Svg></AccountButton>
          <AccountButton aria-label="Account"><Svg w={30}><circle cx="15" cy="15" r="15" fill="#a6b1c5" /><path d="M15 3c-5 0-8 3-8 8 0 4 2 7 4 9l-4 7q8 5 16 0l-4-7c2-2 4-5 4-9 0-5-3-8-8-8z" fill="#4a576b" /></Svg></AccountButton>
        </AccountTools>
      </QuickBar>
      <Ribbon>
        <Workspace>DESIGN <Caret s={7} /></Workspace>
        <RibbonMain>
          <Tabs>{["SOLID", "SURFACE", "MESH", "SHEET METAL", "PLASTIC", "MANAGE", "UTILITIES", "SKETCH"].map((t) => <Tab key={t} $active={t === "SKETCH"}>{t}</Tab>)}</Tabs>
          <Groups>
            {groups.map(([name, tools], i) => (
              <Group key={name} $last={i > 6} $roomy={i > 3}>
                <GroupTools>{tools.map(([label, icon]) => <Tool key={label} aria-label={label} $active={icon === "mirror"}>{I[icon]}</Tool>)}</GroupTools>
                <GroupLabel $roomy={i > 3}>{name}<Caret s={7} /></GroupLabel>
              </Group>
            ))}
          </Groups>
        </RibbonMain>
      </Ribbon>
    </>
  );
}

function BrowserPanel() {
  return (
    <Browser>
      <BarHeader><Double flip /><span>BROWSER</span><Minus /></BarHeader>
      <Tree>
        {nodes.map((n) => (
          <Node key={n.text + n.level} $level={n.level}>
            {n.open === undefined ? <NoToggle /> : <Toggle aria-label={`Toggle ${n.text}`}><Chevron open={n.open} /></Toggle>}
            <NodeBox>
              {n.eye && <Cell>{n.eye === 1 ? <Eye /> : <EyeOff />}</Cell>}
              <NodeName $bold={n.bold} $root={n.root} $selected={n.selected} $hatch={n.hatch}><Cell>{n.icon}</Cell><NodeText>{n.text}</NodeText></NodeName>
              {n.radio && <Cell><Svg w={16}><circle cx="8" cy="8" r="5.5" fill="#222" stroke="#fff" strokeWidth="4" /></Svg></Cell>}
            </NodeBox>
          </Node>
        ))}
      </Tree>
    </Browser>
  );
}

function MirrorDialog() {
  return (
    <Panel>
      <PanelHeader><Minus /><span>MIRROR</span><Double /></PanelHeader>
      <Field><label htmlFor="objects">Objects</label><Selector id="objects" $on><Pointer />24 selected</Selector><Clear aria-label="Clear objects"><Cross s={8} /></Clear></Field>
      <Field><label htmlFor="mirror-line">Mirror Line</label><Selector id="mirror-line"><Pointer />Select</Selector></Field>
      <DialogFooter>
        <Svg w={18}><circle cx="9" cy="9" r="8.5" fill="#8593a9" /><path d="M9 3v3M6 8h3v6M6 14h6" stroke="#303846" strokeWidth="2" /></Svg>
        <Push disabled>OK</Push>
        <Push>Cancel</Push>
      </DialogFooter>
    </Panel>
  );
}

function Palette() {
  return (
    <Panel>
      <PanelHeader><Minus /><span>SKETCH PALETTE</span><Double /></PanelHeader>
      <OptionsHeader><Caret s={9} />Options</OptionsHeader>
      <OptionRows>
        <OptionRow $wide>Linetype
          <IconPair>
            <button aria-label="Construction"><Svg w={20}><path d="M19 1 5 10l14 9" stroke={c.light} strokeWidth="1.5" /><path d="M0 10.5h20M14 2l3 3M16 8v5M14 18l3-3" stroke="#e4697a" strokeWidth="1.4" strokeDasharray="4 1" /></Svg></button>
            <button aria-label="Centerline"><Svg w={20}><path d="M6 1h8v3h4v12h-4v3H6l-5-5V6z" fill="#9ba0a8" stroke={c.light} /><path d="M0 8.5h20v3H0z" fill={c.panel} /><path d="M0 10h20" stroke="#e4697a" strokeWidth="1.6" strokeDasharray="5 1 2 1" /></Svg></button>
          </IconPair>
        </OptionRow>
        <OptionRow>Look At <button aria-label="Look At"><LookAt s={18} /></button></OptionRow>
        {options.map(([t, on]) => <OptionRow key={t}><label htmlFor={t}>{t}</label><Check type="checkbox" id={t} defaultChecked={!!on} /></OptionRow>)}
      </OptionRows>
      <PaletteFooter><Push $wide>Finish Sketch</Push></PaletteFooter>
    </Panel>
  );
}

function Navigation() {
  return (
    <NavBar>
      <NavTool $w={43} $g={9} aria-label="Orbit"><Svg w={20} h={22}><path d="M10 0v22" stroke={c.blue} strokeWidth="1.8" strokeDasharray="6 1" /><path d="M13 6c8 1 8 8-3 8S-3 8 7 6" stroke="#fff" strokeWidth="1.8" /><path d="m9 11 6 3-6 3z" fill="#fff" /></Svg><Caret s={7} /></NavTool>
      <NavTool $w={25} aria-label="Look at"><LookAt /></NavTool>
      <NavTool $w={39} aria-label="Pan"><Svg w={22} h={22}><path d="M8 18C6 15 4 14 2 13M9 15 6 4M11 14V2M14 14l2-11M15 16l5-9" stroke="#dcdfe4" strokeWidth="2.4" strokeLinecap="round" /><path d="M7 12h9l2 1-3 9H9l-4-6z" fill="#dcdfe4" /></Svg></NavTool>
      <NavTool $w={28} aria-label="Zoom"><Svg w={22} h={22}><circle cx="8" cy="11" r="6.5" fill="#566171" stroke="#dcdfe4" strokeWidth="1.6" /><path d="m12 16 4 5" stroke="#e0986c" strokeWidth="3" /><path d="M15 4h6M18 1v6M15 9h6" stroke="#dcdfe4" strokeWidth="1.3" /></Svg></NavTool>
      <NavTool $w={46} $g={7} aria-label="Fit"><Svg w={22}><path d="M1 1h20v20H1z" stroke="#dcdfe4" strokeWidth="1.4" strokeDasharray="3 2" /><circle cx="10" cy="9.5" r="8" fill="#606a79" stroke="#dcdfe4" strokeWidth="1.5" /><path d="m16 16 4 4" stroke="#8a7d3c" strokeWidth="2" /></Svg><Caret s={7} /></NavTool>
      <NavTool $w={39} $g={4} aria-label="Display"><Svg w={20}><path d="M1 2h18v13H1z" fill="#b8bcc3" stroke="#e2e4e8" strokeWidth="1.6" /><path d="M3 4h14v9H3z" stroke="#4f5868" /><path d="M10 15v3M5 18.5h10" stroke="#dcdfe4" strokeWidth="2.5" /></Svg><Caret s={7} /></NavTool>
      <NavTool $w={38} $g={8} aria-label="Grid"><Svg w={18}><path d="M1 1h16v16H1zM6.3 1v16M11.6 1v16M1 6.3h16M1 11.6h16" stroke="#dcdfe4" strokeWidth="1.6" /></Svg><Caret s={7} /></NavTool>
      <NavTool $w={37} $g={5} aria-label="Viewports"><Svg w={20}>{[[0, 0], [11, 0], [0, 11], [11, 11]].map(([x, y]) => <g key={x + "" + y}><rect x={x} y={y} width="9" height="9" fill="#d7dade" /><rect x={x + 2.5} y={y + 2.5} width="4" height="3" stroke="#7b8390" /></g>)}</Svg><Caret s={7} /></NavTool>
    </NavBar>
  );
}

const features = [["Sketch1", <SketchIcon />], ["Extrude1", <Extrude />], ["Extrude2", <Extrude />], ["Sketch2", <SketchIcon />], ["Canvas1", <Picture s={19} />], ["Sketch3", <SketchIcon />]];

function TimelineBar() {
  return (
    <Timeline>
      <Playback>
        <button aria-label="To start"><Svg w={16}><path d="M1 1v14" stroke="#a5abb8" strokeWidth="2" /><path d="M15 1v14L3 8z" fill="#a5abb8" /></Svg></button>
        <button aria-label="Step back"><Svg w={16}><path d="M12 1v14L0 8zM13 5h3v6h-3z" fill="#a5abb8" /></Svg></button>
        <button aria-label="Play"><Svg w={16} h={18}><path d="M1 0v18l14-9z" fill="#a5abb8" /></Svg></button>
        <button aria-label="Step forward"><Svg w={16}><path d="M4 1v14l12-7zM0 5h3v6H0z" fill="#a5abb8" /></Svg></button>
        <button aria-label="To end"><Svg w={16}><path d="M15 1v14" stroke="#a5abb8" strokeWidth="2" /><path d="M1 1v14l12-7z" fill="#a5abb8" /></Svg></button>
      </Playback>
      <History>
        {features.map(([n, icon], i) => <Feature key={n} aria-label={n} $first={i === 0} $on={i === 5}>{icon}</Feature>)}
        <Marker width="15" height="39" viewBox="0 0 15 39"><path d="M0 0h15v6l-5 5v28H7V11L0 6z" fill="#cdd0d8" /></Marker>
      </History>
      <button aria-label="Timeline settings"><GearIcon s={20} /></button>
    </Timeline>
  );
}

export default function App() {
  return (
    <>
      <Global />
      <Page>
        <Header />
        <Stage>
          <ModelView />
          <Overlay>
            <OverlayTop>
              <BrowserPanel />
              <RightSide>
                <CubeSlot><ViewCube /></CubeSlot>
                <Panels><MirrorDialog /><Palette /></Panels>
              </RightSide>
            </OverlayTop>
            <OverlayBottom>
              <BarHeader $h={31} $ml={27}><span>COMMENTS</span><Svg w={12}><path d="M6 1v10M1 6h10" stroke="#a3a9b4" strokeWidth="2.5" /></Svg></BarHeader>
              <Navigation />
              <Status>24 Sketch Curves | Length : 233.127 mm<Svg w={22}><circle cx="11" cy="11" r="10" fill="#151a21" stroke="#dfe2e6" strokeWidth="1.5" /><path d="m5 11 5-4h3l-4 4h7M6 15l4-3h6l-3 3" stroke="#fff" strokeWidth="1.8" /></Svg></Status>
            </OverlayBottom>
          </Overlay>
        </Stage>
        <TimelineBar />
      </Page>
    </>
  );
}
